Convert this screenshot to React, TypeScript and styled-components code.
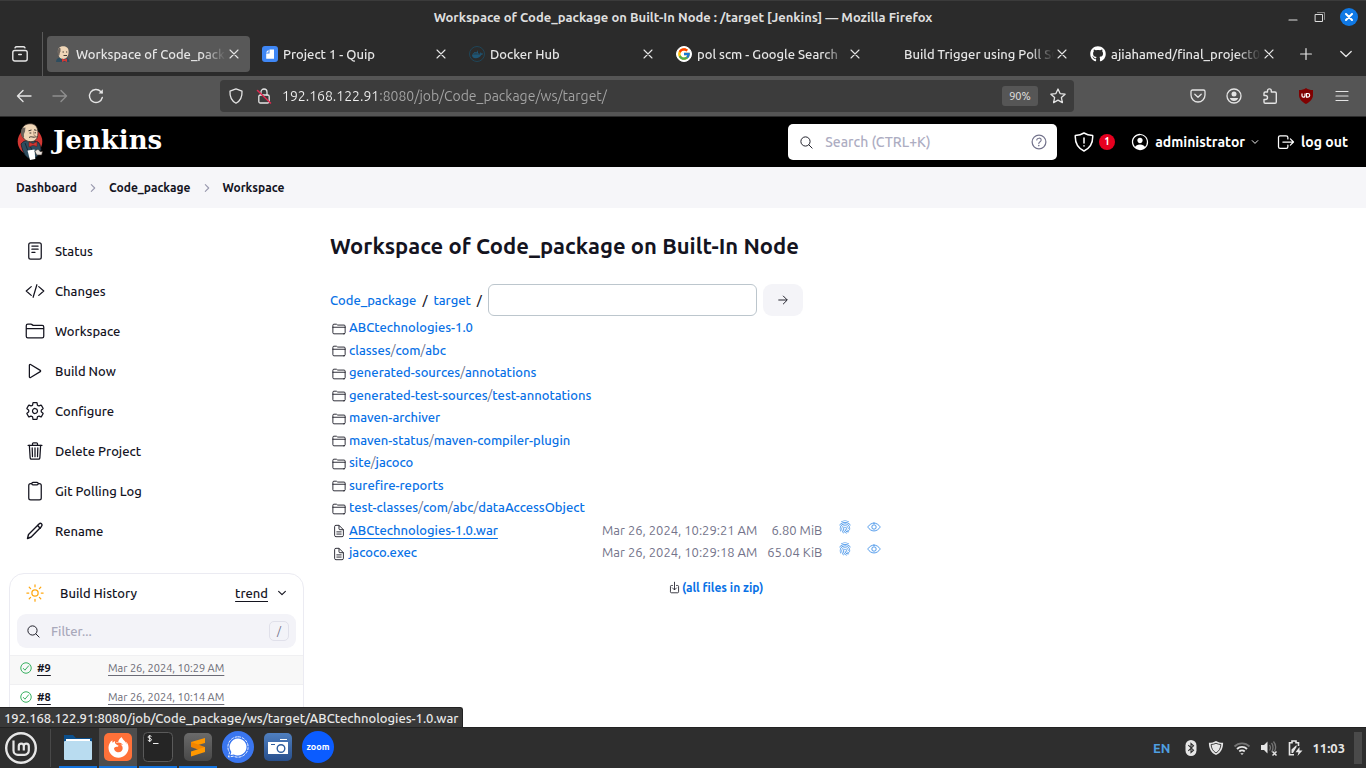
import React from "react";
import styled, { createGlobalStyle, css } from "styled-components";
import {
  IoArrowForwardOutline,
  IoCheckmarkCircleOutline,
  IoChevronDownOutline,
  IoChevronForwardOutline,
  IoClipboardOutline,
  IoCodeSlashOutline,
  IoDocumentTextOutline,
  IoDownloadOutline,
  IoEyeOutline,
  IoFingerPrintOutline,
  IoFolderOutline,
  IoHelpCircleOutline,
  IoLogOutOutline,
  IoPersonCircleOutline,
  IoPlayOutline,
  IoReaderOutline,
  IoSearchOutline,
  IoSettingsOutline,
  IoSunnyOutline,
  IoTrashOutline,
} from "react-icons/io5";
import { FaDocker, FaFirefoxBrowser, FaGithub } from "react-icons/fa";
import { FcGoogle } from "react-icons/fc";

const sans = `Ubuntu, "Noto Sans", "Open Sans", sans-serif`;
const link = "#0871e6";
const ink = "#14141f";

const GlobalStyle = createGlobalStyle`
  *, *::before, *::after { box-sizing: border-box; }
  html, body, #root { height: 100%; margin: 0; }
  body { font-family: ${sans}; font-size: 12px; color: ${ink}; background: #fff; overflow: hidden; }
  button, input { font: inherit; color: inherit; margin: 0; padding: 0; border: 0; background: none; }
  button { cursor: pointer; display: inline-flex; align-items: center; justify-content: center; }
  input { outline: none; min-width: 0; }
  a { color: inherit; text-decoration: none; }
  svg { display: block; flex: none; }
`;

const Desktop = styled.div`
  display: flex;
  flex-direction: column;
  height: 100vh;
`;

/* ---------- window title ---------- */

const TitleBar = styled.header`
  display: grid;
  grid-template-columns: 1fr auto 1fr;
  align-items: center;
  height: 32px;
  padding: 0 8px;
  border-top: 1px solid #3b3b3b;
  background: #2b2b2b;
  color: #dedede;
  font-size: 13px;
  font-weight: 700;
`;

const WindowTitle = styled.span`
  grid-column: 2;
`;

const WindowControls = styled.div`
  display: flex;
  justify-content: flex-end;
  align-items: center;
  gap: 13px;
`;

const WindowButton = styled.button<{ $close?: boolean }>`
  width: ${(p) => (p.$close ? 18 : 14)}px;
  height: 18px;
  border-radius: 9px;
  ${(p) => p.$close && css`background: #1079e5;`}
`;

/* ---------- tabs ---------- */

const TabStrip = styled.nav`
  display: flex;
  align-items: center;
  height: 44px;
  background: #2b2b2b;
  color: #e6e6e6;
`;

const FirefoxView = styled.button`
  width: 43px;
  height: 44px;
  padding-right: 2px;
  border-right: 1px solid #5a5a5a;
`;

const TabList = styled.div`
  display: flex;
  flex: 1;
  gap: 4px;
  min-width: 0;
  margin: 0 1px 0 4px;
`;

const Tab = styled.div<{ $active?: boolean }>`
  display: flex;
  align-items: center;
  flex: 1;
  min-width: 0;
  height: 36px;
  padding: 0 8px;
  border-radius: 4px;
  background: ${(p) => (p.$active ? "#585858" : "transparent")};
`;

const Favicon = styled.span`
  display: flex;
  flex: none;
  width: 16px;
  height: 16px;
  margin-right: 5px;
`;

const TabTitle = styled.span`
  flex: 1;
  min-width: 0;
  overflow: hidden;
  white-space: nowrap;
  font-size: 13px;
  font-weight: 500;
  line-height: 24px;
  mask-image: linear-gradient(to left, transparent, #000 24px);
`;

const TabClose = styled.button`
  width: 16px;
  height: 24px;
`;

const StripButton = styled.button`
  width: 40px;
  height: 36px;
`;

/* ---------- browser toolbar ---------- */

const Toolbar = styled.div`
  display: flex;
  align-items: center;
  height: 41px;
  padding: 0 6px;
  border-bottom: 1px solid #2b2b2b;
  background: #555;
  color: #e4e4e4;
`;

const ToolButton = styled.button<{ $dim?: boolean }>`
  width: 36px;
  height: 32px;
  opacity: ${(p) => (p.$dim ? 0.4 : 1)};
`;

const AddressBar = styled.div`
  display: flex;
  align-items: center;
  flex: 1;
  height: 32px;
  margin: 0 106px;
  padding: 0 2px;
  border-radius: 4px;
  background: #3c3c3c;
`;

const AddressButton = styled.button`
  width: 28px;
  height: 28px;
`;

const Address = styled.input`
  flex: 1;
  height: 28px;
  margin-left: 4px;
  font-size: 14px;
  background: linear-gradient(to right, #f0f0f0 97px, #a6a6a6 97px);
  background-clip: text;
  -webkit-text-fill-color: transparent;
`;

const ZoomLevel = styled.button`
  width: 36px;
  height: 20px;
  margin-right: 6px;
  border-radius: 3px;
  background: #565656;
  font-size: 11px;
`;

/* ---------- Jenkins header ---------- */

const JenkinsHeader = styled.header`
  display: flex;
  align-items: center;
  height: 50px;
  padding: 0 18px 0 16px;
  background: #000;
  color: #fff;
  font-size: 14px;
  font-weight: 600;
`;

const Brand = styled.a`
  display: flex;
  align-items: center;
  gap: 9px;
  margin-right: auto;
  font-family: Georgia, "DejaVu Serif", serif;
  font-size: 26px;
  line-height: 30px;
  font-weight: 700;
`;

const BrandName = styled.span`
  padding-bottom: 4px;
`;

const SearchBox = styled.label`
  display: flex;
  align-items: center;
  width: 269px;
  height: 36px;
  padding: 0 8px 0 11px;
  border-radius: 5px;
  background: #fff;
  color: ${ink};
  font-weight: 500;
`;

const SearchInput = styled.input`
  flex: 1;
  margin-left: 11px;
  &::placeholder { color: #adadc2; opacity: 1; }
`;

const HeaderLink = styled.a<{ $gap: number }>`
  display: flex;
  align-items: center;
  gap: 5px;
  margin-left: ${(p) => p.$gap}px;
  white-space: nowrap;
`;

const Badge = styled.span`
  width: 16px;
  height: 16px;
  border-radius: 8px;
  background: #e6001f;
  font-size: 10px;
  line-height: 16px;
  text-align: center;
`;

const Breadcrumbs = styled.nav`
  display: flex;
  align-items: center;
  gap: 10px;
  flex: none;
  height: 41px;
  padding: 0 16px;
  background: #f6f6f9;
  font-weight: 600;
  color: ${ink};
  > svg { color: #9a9aaf; }
`;

/* ---------- page ---------- */

const Page = styled.div`
  position: relative;
  display: flex;
  flex: 1;
  min-height: 0;
  overflow: hidden;
`;

const Sidebar = styled.aside`
  flex: none;
  width: 304px;
  padding: 23px 0 0 9px;
`;

const Task = styled.a`
  display: flex;
  align-items: center;
  gap: 10px;
  height: 40px;
  padding-left: 16px;
  font-size: 13px;
  font-weight: 500;
`;

const HistoryCard = styled.section`
  height: 400px;
  margin-top: 22px;
  border: 1px solid #ebebf2;
  border-radius: 15px;
`;

const HistoryHead = styled.div`
  display: flex;
  align-items: center;
  height: 40px;
  padding: 0 15px 2px;
  font-size: 13px;
  font-weight: 500;
`;

const HistoryTitle = styled.h2`
  flex: 1;
  margin: 0 0 0 15px;
  font-size: 13px;
  font-weight: 500;
`;

const Underlined = styled.a<{ $muted?: boolean }>`
  color: ${(p) => (p.$muted ? "#6b6b76" : ink)};
  text-decoration: underline;
  text-underline-offset: 3px;
`;

const Toggle = styled.button`
  margin-left: 8px;
`;

const Filter = styled.label`
  display: flex;
  align-items: center;
  height: 34px;
  margin: 0 7px 7px;
  padding: 0 7px 0 9px;
  border-radius: 9px;
  background: #f3f3f8;
`;

const FilterInput = styled.input`
  flex: 1;
  margin-left: 10px;
  font-size: 13px;
  font-weight: 500;
  &::placeholder { color: #a9a9bb; opacity: 1; }
`;

const Key = styled.kbd`
  width: 20px;
  height: 20px;
  border: 1px solid #e0e0ea;
  border-radius: 5px;
  font-family: inherit;
  font-size: 11px;
  line-height: 18px;
  text-align: center;
  color: #6b6b85;
`;

const Builds = styled.table`
  width: 100%;
  table-layout: fixed;
  border-collapse: collapse;
  font-size: 11px;
  td:first-child { width: 98px; }
`;

const BuildRow = styled.tr<{ $shaded?: boolean }>`
  height: 29px;
  background: ${(p) => (p.$shaded ? "#f8f8f8" : "#fff")};
  border-top: 1px solid #f0f0f2;
  td { padding: 0 0 4px; }
`;

const BuildNumber = styled.span`
  display: flex;
  align-items: center;
  gap: 4px;
  padding-left: 9px;
  font-weight: 600;
  > svg { color: #1ea64b; }
`;

const Main = styled.main`
  flex: 1;
  padding: 22px 26px;
`;

const Heading = styled.h1`
  margin: 0;
  font-size: 22px;
  line-height: 32px;
  font-weight: 700;
`;

const PathForm = styled.form`
  display: flex;
  align-items: center;
  gap: 6px;
  height: 32px;
  margin-top: 22px;
  color: ${ink};
  font-size: 13px;
  font-weight: 500;
`;

const PathLink = styled.a`
  color: ${link};
`;

const PatternInput = styled.input`
  width: 269px;
  height: 32px;
  padding: 0 8px;
  border: 1px solid #bcc6cd;
  border-radius: 6px;
`;

const GoButton = styled.button`
  width: 40px;
  height: 32px;
  border-radius: 9px;
  background: #f4f4f8;
  path { stroke-width: 34px; }
`;

const Files = styled.table`
  border-collapse: collapse;
  color: #73738a;
  font-size: 13px;
  line-height: 18px;
  td { padding: 0; white-space: nowrap; }
  td:first-child { width: 19px; padding: 3px 0 0 2px; }
  td:nth-child(2) { width: 253px; }
  td:nth-child(3) { width: 155px; }
  td:nth-child(4) { width: 65px; text-align: right; }
  td:nth-child(5) { padding-left: 16px; }
  td:nth-child(6) { padding-left: 15px; }
`;

const FileRow = styled.tr`
  height: 22px;
  &:nth-child(even) { height: 23px; }
`;

const FileLink = styled.a<{ $hover?: boolean }>`
  color: ${link};
  font-weight: 500;
  ${(p) => p.$hover && css`
    text-decoration: underline;
    text-underline-offset: 3px;
  `}
`;

const IconLink = styled.a`
  display: block;
  padding-bottom: 6px;
  color: #3b8ee8;
`;

const ZipLink = styled.a`
  display: flex;
  align-items: center;
  gap: 1px;
  width: max-content;
  margin: 18px 0 0 338px;
  color: ${link};
  font-weight: 600;
  > svg { color: ${ink}; }
`;

const LinkStatus = styled.output`
  position: absolute;
  left: 0;
  bottom: 0;
  height: 20px;
  padding: 0 4px;
  border-top: 1px solid #222;
  border-right: 1px solid #222;
  border-top-right-radius: 3px;
  background: #393939;
  color: #e8e8e8;
  font-size: 13px;
  font-weight: 500;
  line-height: 20px;
`;

/* ---------- desktop panel ---------- */

const Panel = styled.footer`
  display: flex;
  align-items: center;
  flex: none;
  height: 41px;
  padding: 0 4px;
  border-top: 1px solid #222;
  background: #2e2e2e;
  color: #e6e6e6;
`;

const MenuButton = styled.button`
  width: 47px;
  height: 38px;
  justify-content: flex-start;
  margin-right: 8px;
  border-right: 1px solid #484848;
`;

const AppButton = styled.button<{ $open?: boolean; $focused?: boolean }>`
  width: 38px;
  height: 40px;
  margin-right: 2px;
  border-bottom: 2px solid ${(p) => (p.$open ? "#1373de" : "transparent")};
  background: ${(p) => (p.$focused ? "#4d4d4d" : "transparent")};
`;

const Tray = styled.div`
  display: flex;
  align-items: center;
  gap: 9px;
  margin-left: auto;
`;

const Language = styled.span`
  margin-right: 4px;
  color: #4f9fe0;
  font-size: 13px;
  font-weight: 600;
`;

const Clock = styled.time`
  font-size: 13px;
  font-weight: 700;
`;

const ShowDesktop = styled.button`
  width: 8px;
  height: 32px;
  background: #4a4a4a;
`;

/* ---------- drawings ---------- */

type LineProps = { size?: number; box?: number; width?: number; children: React.ReactNode };

const Line = ({ size = 16, box = 16, width = 1.2, children }: LineProps) => (
  <svg width={size} height={size} viewBox={`0 0 ${box} ${box}`} fill="none" stroke="currentColor" strokeWidth={width} strokeLinecap="round" strokeLinejoin="round">
    {children}
  </svg>
);

const CrossIcon = () => (
  <Line size={10} box={10} width={1.1}><path d="M1 1l8 8M9 1L1 9" /></Line>
);

const Butler = () => (
  <svg width="28" height="38" viewBox="0 0 28 38">
    <ellipse cx="14" cy="18.500" rx="12.300" ry="13" fill="#d33833" />
    <path d="M5 21c2-2.500 4-3.500 7-3.500l9 1c2.500 1 3.500 4 4 8l-3 6c-2 2-5 3-8 3-4-1-7-5-9-14.500z" fill="#2e4d5f" stroke="#12212b" strokeWidth=".8" />
    <path d="M6.500 5C8 1.500 12 .4 15.500.8c4 .4 6.200 3.600 6.400 8 .3 5.400-1.400 9.200-6 9.800C11 19.200 7 16 5.800 12c-.8-2.500-.4-5 .7-7z" fill="#f0d6b7" stroke="#3a302a" strokeWidth=".8" />
    <path d="M6.500 5C4.500 7.500 4.800 10.500 6 13.500l2 1.500c.4-2-.8-3.500.6-5.500 1-1.500.2-3 1-5z" fill="#6b625b" />
    <path d="M12.500 7.800l3-.8M18 6.800l2.500.5M13.500 10h1.800M18.500 9.800h1.500M13 14.500c2-1.500 3.500-.2 5-.3 1 0 1.800-.8 2.800-.2" stroke="#3b332d" strokeWidth="1" fill="none" />
    <path d="M17.500 8.500l.6 4h1.400" stroke="#a5866b" strokeWidth=".8" fill="none" />
    <path d="M13 19l4 1.700 4-2.200v5l-4-1.300-4 1.800z" fill="#d33833" stroke="#6d1512" strokeWidth=".5" />
    <path d="M9 20l3 8M14.500 24l2 4" stroke="#12212b" strokeWidth=".8" />
    <path d="M11.500 27.500l7-1 .8 9.500-5.300 1z" fill="#fff" />
    <path d="M19 28.500c1-1.500 2-2 3.500-2l1.500 2h2.500l-.8 3.500h-5z" fill="#e9e2dc" stroke="#3a302a" strokeWidth=".6" />
  </svg>
);

const ButlerHead = () => (
  <svg width="16" height="16" viewBox="0 0 16 16">
    <path d="M1 16c0-3 2-4 4-4.500h6c2 .5 3 2 3.500 4.500z" fill="#2e4d5f" />
    <path d="M4 2c1-2 6-2.500 8-.5 2 1.500 2 5 1 8-1 2.500-3 3.500-5 3.500-3 0-4.500-3-5-6C2.700 5 3 3 4 2z" fill="#f0d6b7" />
    <path d="M4.500 1.500C2 4 2.500 7 3.500 10c1.500 0 .8-3 2-4.500V2.500z" fill="#6e655e" />
    <path d="M7.500 6H9M11 6h1.200M8.500 9.500h3.500" stroke="#4b4038" strokeWidth="1" />
    <path d="M7 12.500l2.500 1 2.500-1V16l-2.500-1L7 16z" fill="#d33833" />
  </svg>
);

const QuipIcon = () => (
  <svg width="16" height="16" viewBox="0 0 16 16">
    <rect width="16" height="16" rx="3" fill="#3f87f5" />
    <path d="M7.500 3.500H12v9.200H4.200V7.500h3.300z" fill="#fff" />
    <path d="M3.800 6.500l2.700-2.700v2.700z" fill="#fff" />
  </svg>
);

const RoundIcon = styled.span<{ $fill?: string; $ring?: string }>`
  display: flex;
  align-items: center;
  justify-content: center;
  width: 16px;
  height: 16px;
  border: 1px solid ${(p) => p.$ring ?? p.$fill};
  border-radius: 8px;
  background: ${(p) => p.$fill ?? "transparent"};
`;

const FirefoxViewIcon = () => (
  <Line width={1.4}>
    <rect x=".8" y="4.500" width="14.400" height="10.500" rx="2" />
    <path d="M3 1.800c.4-.7 1-1 1.700-1h6.600c.7 0 1.300.3 1.700 1M6.700 8.500h2.600" />
  </Line>
);

const ReloadIcon = () => (
  <Line width={1.4}>
    <path d="M14.300 9.500A6.500 6.500 0 1 1 12.700 3.500l1.300 1.300" />
    <path d="M14.800 1.300v4.200h-4.200z" fill="currentColor" stroke="none" />
  </Line>
);

const ShieldIcon = () => (
  <Line width={1.300}><path d="M8 .9l6 2.300c.3 4.800-1 9.300-6 12-5-2.700-6.300-7.200-6-12z" /></Line>
);

const InsecureIcon = () => (
  <Line width={1.300}>
    <rect x="2.800" y="7" width="10.400" height="8" rx="1.500" />
    <path d="M5 7V4a3 3 0 0 1 6 0v3" />
    <path d="M1.500 2.500l13 12.500" stroke="#e22850" strokeWidth="1.500" />
  </Line>
);

const StarIcon = () => (
  <Line width={1.300}>
    <path d="M8 1l2.100 4.600 5 .6-3.700 3.400 1 5L8 12.100l-4.400 2.500 1-5L.9 6.200l5-.6z" />
  </Line>
);

const PocketIcon = () => (
  <Line width={1.300}>
    <path d="M2.500 2h11c.8 0 1.500.6 1.500 1.500V7a7 7 0 0 1-14 0V3.500C1 2.600 1.700 2 2.500 2z" />
    <path d="M4.800 6.300L8 9.300l3.200-3" />
  </Line>
);

const AccountIcon = () => (
  <Line width={1.300}>
    <circle cx="8" cy="8" r="7" />
    <circle cx="8" cy="6" r="2.500" fill="currentColor" stroke="none" />
    <path d="M3.800 10h8.400c-.6 2-2.200 3-4.200 3s-3.600-1-4.200-3z" fill="currentColor" stroke="none" />
  </Line>
);

const ExtensionIcon = () => (
  <Line width={1.400}>
    <path d="M2 7.500V5.300C2 4.500 2.500 4 3.200 4h2.300V2.800a1.900 1.900 0 0 1 3.800 0V4H13c.8 0 1.300.5 1.300 1.300V14c0 .7-.5 1.200-1.300 1.200H3.200c-.7 0-1.200-.5-1.200-1.200v-2.500h1.500a1.900 1.900 0 0 0 0-4z" />
  </Line>
);

const UblockIcon = () => (
  <svg width="16" height="16" viewBox="0 0 16 16">
    <path d="M8 0c2 1.400 4 2 7 2v5c0 4-3 7-7 9-4-2-7-5-7-9V2c3 0 5-.6 7-2z" fill="#800000" />
    <path d="M4 5.500v2.200a1.500 1.500 0 0 0 3 0V5.500" stroke="#fff" strokeWidth="1.200" fill="none" />
    <path d="M8.500 5.500h1.400a1.800 1.800 0 0 1 0 3.600H8.500z" stroke="#fff" strokeWidth="1.200" fill="none" />
  </svg>
);

const WarningShield = () => (
  <Line size={20} box={20} width={1.500}>
    <path d="M10 1c2.500 1.600 5 2.300 8.700 2.500.4 7.500-2 12.500-8.700 15.500C3.300 16 .9 11 1.300 3.500 5 3.300 7.500 2.600 10 1z" />
    <path d="M10 6v5M10 13.800v.2" />
  </Line>
);

const PencilIcon = () => (
  <Line size={20} box={20} width={1.400}>
    <path d="M2.500 17.500l1-4L14 3c.8-.8 1.800-.9 2.500-.2s.7 1.800 0 2.600L6.200 16z" />
    <path d="M12.600 4.500l2.600 2.700" />
  </Line>
);

const MintIcon = () => (
  <svg width="34" height="34" viewBox="0 0 34 34" fill="none" stroke="#e6e6e6">
    <circle cx="17" cy="17" r="14.800" strokeWidth="2.400" />
    <path d="M9.500 9.500v10a4.300 4.300 0 0 0 4.300 4.300h6.700a4.300 4.300 0 0 0 4.300-4.300V15.200a2.500 2.500 0 0 0-5 0v4.300M19.800 15.200a2.500 2.500 0 0 0-5 0v4.300" strokeWidth="2.200" />
  </svg>
);

const FilesIcon = () => (
  <svg width="30" height="28" viewBox="0 0 30 28">
    <path d="M1 2h9l3 3h16v9H1z" fill="#0b4f8c" />
    <rect x="3" y="6" width="24" height="6" fill="#fff" />
    <rect x="1" y="8" width="28" height="19" rx="1" fill="#b9dcf0" />
  </svg>
);

const AppTile = styled.span<{ $color: string; $round?: boolean }>`
  display: flex;
  align-items: center;
  justify-content: center;
  width: ${(p) => (p.$round ? 32 : 28)}px;
  height: ${(p) => (p.$round ? 32 : 28)}px;
  border-radius: ${(p) => (p.$round ? 16 : 5)}px;
  background: ${(p) => p.$color};
  color: #fff;
`;

const ZoomWord = styled.span`
  font-size: 9px;
  font-weight: 700;
`;

const TerminalIcon = () => (
  <svg width="30" height="30" viewBox="0 0 30 30">
    <rect x=".5" y=".5" width="29" height="29" rx="4" fill="#252525" stroke="#5a5a5a" />
    <path d="M8.500 4.500c-1-1-3.500-.8-3.500.6 0 1.600 3.500.9 3.500 2.600 0 1.500-2.600 1.600-3.700.5M6.700 3v7" stroke="#eee" fill="none" />
    <path d="M10 11.500h5.500" stroke="#eee" />
  </svg>
);

const SublimeMark = () => (
  <svg width="18" height="20" viewBox="0 0 18 20">
    <path d="M2 5l14-4v5L2 10z" fill="#ff9800" />
    <path d="M2 5l14 5v5L2 10z" fill="#f08400" />
    <path d="M16 10v5L2 19.500v-5z" fill="#ff9800" />
  </svg>
);

const SignalMark = () => (
  <svg width="24" height="24" viewBox="0 0 24 24">
    <path d="M12 3.500a8.500 8.500 0 1 1-4.200 15.900L4.500 20l.8-3A8.500 8.500 0 0 1 12 3.500z" fill="#fff" />
    <path d="M12 1.800a10.200 10.200 0 1 1-4.500 19.400L2.500 22l1-4.500A10.200 10.200 0 0 1 12 1.800z" fill="none" stroke="#fff" strokeWidth=".9" strokeDasharray="3 1" />
  </svg>
);

const CameraMark = () => (
  <svg width="22" height="20" viewBox="0 0 22 20">
    <path d="M1 5h20v12H1zM13 2h7v1h-7z" fill="#fff" />
    <path d="M4 7h4v1H4z" fill="#2f5d9e" />
    <circle cx="14" cy="11.500" r="3.800" fill="#fff" stroke="#2f5d9e" strokeWidth="1.400" />
  </svg>
);

const BluetoothIcon = () => (
  <svg width="16" height="18" viewBox="0 0 16 18">
    <rect x="2.500" y="1" width="11" height="16" rx="5.500" fill="#e6e6e6" />
    <path d="M5.300 6.200l5.200 5L8 13.500v-9l2.500 2.300-5.200 5" stroke="#2e2e2e" fill="none" strokeWidth="1.100" />
  </svg>
);

const TrayShield = () => (
  <svg width="16" height="16" viewBox="0 0 18 18">
    <path d="M9 1c2.500 1.500 5 2 8 2 0 6-2 11-8 14-6-3-8-8-8-14 3 0 5.500-.5 8-2z" fill="#e6e6e6" />
    <path d="M9 3.700c2 1 3.800 1.300 5.500 1.400-.3 4.200-1.800 7.200-5.500 9.500-3.700-2.300-5.200-5.300-5.500-9.500 1.700-.1 3.500-.4 5.500-1.400z" fill="none" stroke="#2e2e2e" />
  </svg>
);

const WifiIcon = () => (
  <svg width="18" height="18" viewBox="0 0 18 18" fill="none" strokeWidth="1.800">
    <path d="M1.500 7.500a10.500 10.500 0 0 1 15 0" stroke="#757575" />
    <path d="M4 10a7 7 0 0 1 10 0M6.300 12.500a3.800 3.800 0 0 1 5.400 0" stroke="#e6e6e6" />
    <path d="M7.300 14.300h3.400L9 16z" fill="#e6e6e6" />
  </svg>
);

const VolumeIcon = () => (
  <svg width="18" height="18" viewBox="0 0 18 18" fill="none">
    <path d="M1 6h3l3.500-3.500v12L4 11H1z" fill="#e6e6e6" />
    <path d="M9.500 6c1 1.500 1 4 0 5.500M11.500 4c2 2.500 2 6.500 0 9M13.500 2.500c2.500 3 2.500 7 1 10" stroke="#757575" strokeWidth="1.300" />
    <path d="M12.500 12.500l4 4M16.500 12.500l-4 4" stroke="#e6e6e6" strokeWidth="1.500" />
  </svg>
);

const BatteryIcon = () => (
  <svg width="16" height="18" viewBox="0 0 16 18" fill="none">
    <path d="M7 15.800H2.500v-12H5V2h4v1.800h2.500V7" stroke="#e6e6e6" strokeWidth="1.600" />
    <path d="M4.500 10.500L9.500 6v2l-3.500 6H4.500z" fill="#e6e6e6" />
    <path d="M12.500 8L8.500 13.300h3L10.500 17l5-5.500h-3z" fill="#e6e6e6" />
  </svg>
);

/* ---------- content ---------- */

const tabs = [
  { title: "Workspace of Code_package", icon: <ButlerHead />, active: true },
  { title: "Project 1 - Quip", icon: <QuipIcon /> },
  { title: "Docker Hub", icon: <RoundIcon $ring="#1f4558"><FaDocker size={11} color="#1f5675" /></RoundIcon> },
  { title: "pol scm - Google Search", icon: <RoundIcon $fill="#fff"><FcGoogle size={14} /></RoundIcon> },
  { title: "Build Trigger using Poll SCM", icon: null },
  { title: "ajiahamed/final_project01", icon: <FaGithub size={16} color="#fff" /> },
];

const tasks = [
  { label: "Status", Icon: IoReaderOutline },
  { label: "Changes", Icon: IoCodeSlashOutline },
  { label: "Workspace", Icon: IoFolderOutline },
  { label: "Build Now", Icon: IoPlayOutline },
  { label: "Configure", Icon: IoSettingsOutline },
  { label: "Delete Project", Icon: IoTrashOutline },
  { label: "Git Polling Log", Icon: IoClipboardOutline },
  { label: "Rename", Icon: PencilIcon },
];

const folders = [
  "ABCtechnologies-1.0",
  "classes/com/abc",
  "generated-sources/annotations",
  "generated-test-sources/test-annotations",
  "maven-archiver",
  "maven-status/maven-compiler-plugin",
  "site/jacoco",
  "surefire-reports",
  "test-classes/com/abc/dataAccessObject",
];

const files = [
  { name: "ABCtechnologies-1.0.war", date: "Mar 26, 2024, 10:29:21 AM", size: "6.80 MiB", hover: true },
  { name: "jacoco.exec", date: "Mar 26, 2024, 10:29:18 AM", size: "65.04 KiB" },
];

const builds = [
  { id: "#9", date: "Mar 26, 2024, 10:29 AM" },
  { id: "#8", date: "Mar 26, 2024, 10:14 AM" },
];

const FolderPath = ({ path }: { path: string }) => (
  <>
    {path.split("/").map((part, i) => (
      <React.Fragment key={part}>
        {i > 0 && "/"}
        <FileLink href="#">{part}</FileLink>
      </React.Fragment>
    ))}
  </>
);

export default function App() {
  return (
    <Desktop>
      <GlobalStyle />

      <TitleBar>
        <WindowTitle>Workspace of Code_package on Built-In Node : /target [Jenkins] — Mozilla Firefox</WindowTitle>
        <WindowControls>
          <WindowButton aria-label="Minimize"><Line size={10} box={10}><path d="M1 8h8" /></Line></WindowButton>
          <WindowButton aria-label="Restore">
            <Line size={12} box={12} width={1}><path d="M1.500 3.500h7v7h-7z" /><path d="M3.500 1.500h7v7" opacity=".5" /></Line>
          </WindowButton>
          <WindowButton $close aria-label="Close window"><Line size={8} box={8} width={2}><path d="M1 1l6 6M7 1L1 7" stroke="#fff" /></Line></WindowButton>
        </WindowControls>
      </TitleBar>

      <TabStrip>
        <FirefoxView aria-label="Firefox View"><FirefoxViewIcon /></FirefoxView>
        <TabList>
          {tabs.map((tab) => (
            <Tab key={tab.title} $active={tab.active}>
              <Favicon>{tab.icon}</Favicon>
              <TabTitle>{tab.title}</TabTitle>
              <TabClose aria-label="Close tab"><CrossIcon /></TabClose>
            </Tab>
          ))}
        </TabList>
        <StripButton aria-label="New tab"><Line size={12} box={12}><path d="M6 .6v10.800M.6 6h10.800" /></Line></StripButton>
        <StripButton aria-label="List all tabs"><Line size={12} box={12} width={1.300}><path d="M.8 3.500L6 8.500l5.200-5" /></Line></StripButton>
      </TabStrip>

      <Toolbar>
        <ToolButton aria-label="Back"><Line width={1.400}><path d="M15 8H1.500M7 2.500L1.500 8 7 13.500" /></Line></ToolButton>
        <ToolButton aria-label="Forward" $dim><Line width={1.400}><path d="M1 8h13.500M9 2.500L14.500 8 9 13.500" /></Line></ToolButton>
        <ToolButton aria-label="Reload"><ReloadIcon /></ToolButton>
        <AddressBar>
          <AddressButton aria-label="Tracking protection"><ShieldIcon /></AddressButton>
          <AddressButton aria-label="Connection not secure"><InsecureIcon /></AddressButton>
          <Address aria-label="Address" defaultValue="192.168.122.91:8080/job/Code_package/ws/target/" />
          <ZoomLevel>90%</ZoomLevel>
          <AddressButton aria-label="Bookmark"><StarIcon /></AddressButton>
        </AddressBar>
        <ToolButton aria-label="Pocket"><PocketIcon /></ToolButton>
        <ToolButton aria-label="Account"><AccountIcon /></ToolButton>
        <ToolButton aria-label="Extensions"><ExtensionIcon /></ToolButton>
        <ToolButton aria-label="uBlock Origin"><UblockIcon /></ToolButton>
        <ToolButton aria-label="Menu"><Line><path d="M2 3.500h12M2 8h12M2 12.500h12" /></Line></ToolButton>
      </Toolbar>

      <JenkinsHeader>
        <Brand href="#"><Butler /><BrandName>Jenkins</BrandName></Brand>
        <SearchBox>
          <IoSearchOutline size={15} />
          <SearchInput aria-label="Search" placeholder="Search (CTRL+K)" />
          <IoHelpCircleOutline size={20} color="#73738c" />
        </SearchBox>
        <HeaderLink href="#" $gap={17} aria-label="1 security warning"><WarningShield /><Badge>1</Badge></HeaderLink>
        <HeaderLink href="#" $gap={15}><IoPersonCircleOutline size={20} />administrator<IoChevronDownOutline size={10} /></HeaderLink>
        <HeaderLink href="#" $gap={16}><IoLogOutOutline size={20} />log out</HeaderLink>
      </JenkinsHeader>

      <Breadcrumbs>
        <a href="#">Dashboard</a>
        <IoChevronForwardOutline size={12} />
        <a href="#">Code_package</a>
        <IoChevronForwardOutline size={12} />
        <a href="#">Workspace</a>
      </Breadcrumbs>

      <Page>
        <Sidebar>
          {tasks.map(({ label, Icon }) => (
            <Task href="#" key={label}><Icon size={20} />{label}</Task>
          ))}
          <HistoryCard>
            <HistoryHead>
              <IoSunnyOutline size={20} color="#ffa812" />
              <HistoryTitle>Build History</HistoryTitle>
              <Underlined href="#">trend</Underlined>
              <Toggle aria-label="Collapse"><IoChevronDownOutline size={12} /></Toggle>
            </HistoryHead>
            <Filter>
              <IoSearchOutline size={15} />
              <FilterInput aria-label="Filter builds" placeholder="Filter..." />
              <Key>/</Key>
            </Filter>
            <Builds>
              <tbody>
                {builds.map((build, i) => (
                  <BuildRow key={build.id} $shaded={i === 0}>
                    <td><BuildNumber><IoCheckmarkCircleOutline size={14} /><Underlined href="#">{build.id}</Underlined></BuildNumber></td>
                    <td><Underlined href="#" $muted>{build.date}</Underlined></td>
                  </BuildRow>
                ))}
              </tbody>
            </Builds>
          </HistoryCard>
        </Sidebar>

        <Main>
          <Heading>Workspace of Code_package on Built-In Node</Heading>
          <PathForm>
            <PathLink href="#">Code_package</PathLink>/
            <PathLink href="#">target</PathLink>/
            <PatternInput aria-label="File pattern" />
            <GoButton type="button" aria-label="Go"><IoArrowForwardOutline size={14} /></GoButton>
          </PathForm>
          <Files>
            <tbody>
              {folders.map((path) => (
                <FileRow key={path}>
                  <td><IoFolderOutline size={14} color={ink} /></td>
                  <td><FolderPath path={path} /></td>
                </FileRow>
              ))}
              {files.map((file) => (
                <FileRow key={file.name}>
                  <td><IoDocumentTextOutline size={14} color={ink} /></td>
                  <td><FileLink href="#" $hover={file.hover}>{file.name}</FileLink></td>
                  <td>{file.date}</td>
                  <td>{file.size}</td>
                  <td><IconLink href="#" aria-label="Fingerprint"><IoFingerPrintOutline size={14} /></IconLink></td>
                  <td><IconLink href="#" aria-label="View"><IoEyeOutline size={14} /></IconLink></td>
                </FileRow>
              ))}
            </tbody>
          </Files>
          <ZipLink href="#"><IoDownloadOutline size={13} />(all files in zip)</ZipLink>
        </Main>

        <LinkStatus>192.168.122.91:8080/job/Code_package/ws/target/ABCtechnologies-1.0.war</LinkStatus>
      </Page>

      <Panel>
        <MenuButton aria-label="Menu"><MintIcon /></MenuButton>
        <AppButton $open aria-label="Files"><FilesIcon /></AppButton>
        <AppButton $open $focused aria-label="Firefox"><AppTile $color="#ff7139"><FaFirefoxBrowser size={21} /></AppTile></AppButton>
        <AppButton $open aria-label="Terminal"><TerminalIcon /></AppButton>
        <AppButton $open aria-label="Sublime Text"><AppTile $color="linear-gradient(#6a6a6a, #484848)"><SublimeMark /></AppTile></AppButton>
        <AppButton aria-label="Signal"><AppTile $round $color="#3a76f0"><SignalMark /></AppTile></AppButton>
        <AppButton aria-label="Screenshot"><AppTile $color="linear-gradient(#4f7fc0, #284f8c)"><CameraMark /></AppTile></AppButton>
        <AppButton aria-label="Zoom"><AppTile $round $color="#0b5cff"><ZoomWord>zoom</ZoomWord></AppTile></AppButton>
        <Tray>
          <Language>EN</Language>
          <BluetoothIcon />
          <TrayShield />
          <WifiIcon />
          <VolumeIcon />
          <BatteryIcon />
          <Clock>11:03</Clock>
          <ShowDesktop aria-label="Show desktop" />
        </Tray>
      </Panel>
    </Desktop>
  );
}
